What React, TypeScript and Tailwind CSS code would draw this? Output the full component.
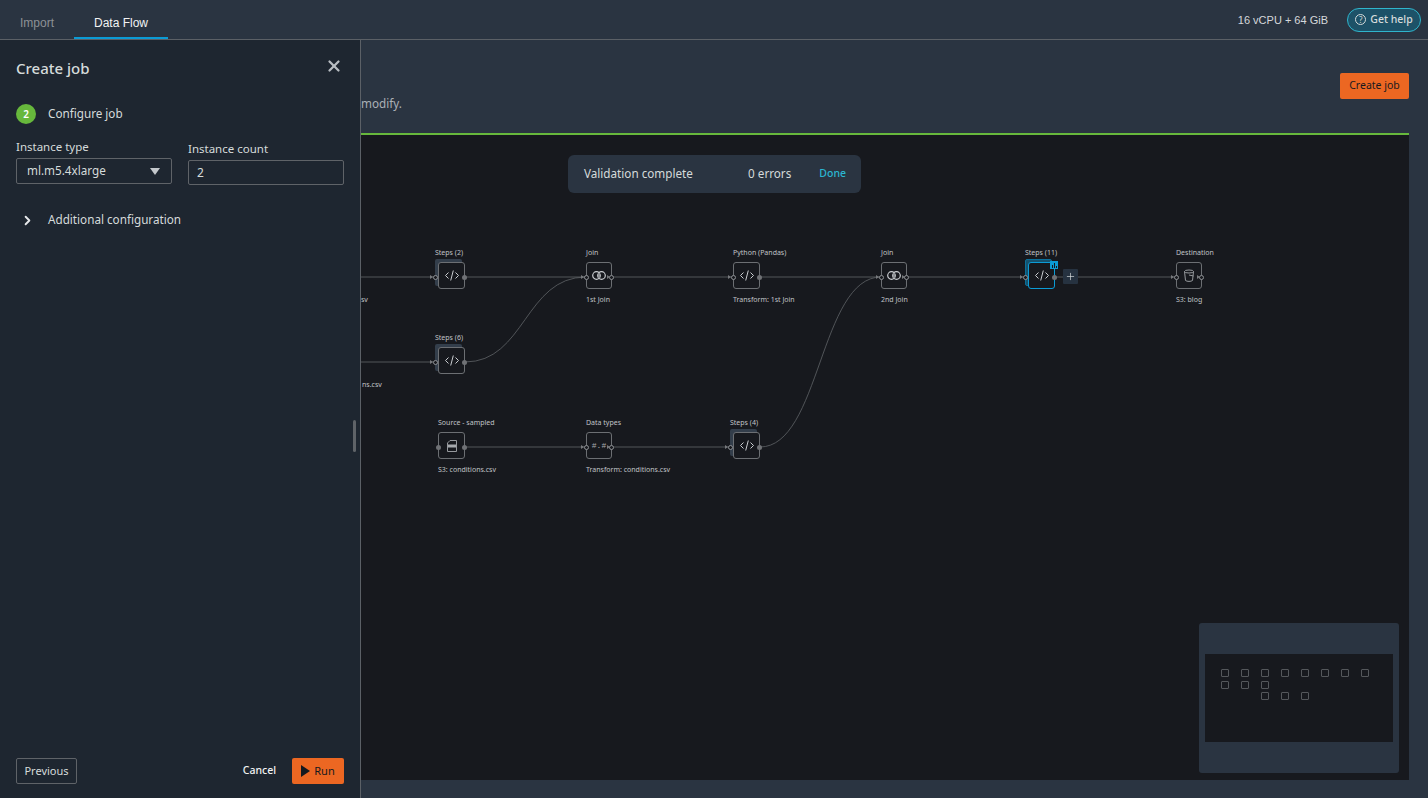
import { X, ChevronRight, Plus } from 'lucide-react'

const uiFont = "font-['Noto_Sans',sans-serif]"

type Port = 'open' | 'filled'
type GraphNode = {
  x: number
  y: number
  w: number
  top: string
  topX?: number
  bottom?: string
  icon: 'code' | 'join' | 'file' | 'types' | 'bucket'
  stacked?: boolean
  selected?: boolean
  left?: Port
  right: Port
  leftX?: number
}

const nodes: GraphNode[] = [
  { x: 438, y: 262, w: 27, top: 'Steps (2)', topX: 435, icon: 'code', stacked: true, left: 'open', right: 'filled', leftX: 435 },
  { x: 586, y: 262, w: 26, top: 'Join', bottom: '1st Join', icon: 'join', left: 'open', right: 'open' },
  { x: 733, y: 262, w: 27, top: 'Python (Pandas)', bottom: 'Transform: 1st Join', icon: 'code', left: 'open', right: 'filled' },
  { x: 881, y: 262, w: 26, top: 'Join', bottom: '2nd Join', icon: 'join', left: 'open', right: 'open' },
  { x: 1028, y: 262, w: 27, top: 'Steps (11)', topX: 1025, icon: 'code', stacked: true, selected: true, left: 'open', right: 'filled', leftX: 1025 },
  { x: 1176, y: 262, w: 26, top: 'Destination', bottom: 'S3: blog', icon: 'bucket', left: 'open', right: 'open' },
  { x: 438, y: 347, w: 27, top: 'Steps (6)', topX: 435, icon: 'code', stacked: true, left: 'open', right: 'filled', leftX: 435 },
  { x: 438, y: 432, w: 27, top: 'Source - sampled', bottom: 'S3: conditions.csv', icon: 'file', left: 'filled', right: 'filled' },
  { x: 586, y: 432, w: 26, top: 'Data types', bottom: 'Transform: conditions.csv', icon: 'types', left: 'open', right: 'open' },
  { x: 733, y: 432, w: 27, top: 'Steps (4)', topX: 730, icon: 'code', stacked: true, left: 'open', right: 'filled', leftX: 730 },
]

const miniSquares = [
  [1221, 669], [1241, 669], [1261, 669], [1281, 669], [1301, 669], [1321, 669], [1341, 669], [1361, 669],
  [1221, 681], [1241, 681], [1261, 681],
  [1261, 692], [1281, 692], [1301, 692],
]

function NodeIcon({ icon }: { icon: GraphNode['icon'] }) {
  if (icon === 'types') {
    return <span className="text-[8px] leading-none text-[#a6a9ad] font-['Liberation_Mono',monospace]">#.#</span>
  }
  const dim = icon === 'file' || icon === 'bucket'
  return (
    <svg width="16" height="16" viewBox="0 0 16 16" fill="none" stroke={dim ? '#96999d' : '#c9ccd0'} strokeWidth="1">
      {icon === 'code' && <path d="M4.5 4.5 1.5 7.5l3 3M11.5 4.5l3 3-3 3M9.3 2.5 6.7 12.5" />}
      {icon === 'join' && (
        <>
          <circle cx="5.5" cy="7.5" r="3.8" strokeWidth="1.2" />
          <circle cx="10.5" cy="7.5" r="3.8" strokeWidth="1.2" />
          <path d="M8 5v5" stroke="#8f9296" strokeWidth="2" />
        </>
      )}
      {icon === 'file' && (
        <>
          <path d="M6 2.5h6.5v11h-9V5Z" />
          <rect x="4" y="6.5" width="8" height="3" fill="#a6a9ad" stroke="none" />
        </>
      )}
      {icon === 'bucket' && (
        <>
          <ellipse cx="8" cy="3.5" rx="4.5" ry="1.5" />
          <path d="M3.5 3.5 4.5 12.5c1.5 1.2 5.5 1.2 7 0l1-9M8 7l4.5 1" />
        </>
      )}
    </svg>
  )
}

function PortDot({ kind, x, y }: { kind: Port; x: number; y: number }) {
  return (
    <>
      {kind === 'open' && (
        <span
          className="absolute w-0 h-0 border-y-[2px] border-y-transparent border-l-[3px] border-l-[#77797d]"
          style={{ left: x - 5, top: y - 2 }}
        />
      )}
      <span
        className={
          kind === 'open'
            ? 'absolute w-[5px] h-[5px] rounded-full border border-[#8d9094] bg-[#17191e]'
            : 'absolute w-[5px] h-[5px] rounded-full bg-[#6f7175]'
        }
        style={{ left: x - 2.5, top: y - 2.5 }}
      />
    </>
  )
}

function FlowNode({ node }: { node: GraphNode }) {
  const border = node.selected ? 'border-[#0b9bd5] border-[1.5px]' : 'border-[#6c6f73]'
  const cy = node.y + 15
  return (
    <>
      <span
        className="absolute text-[7px] leading-[10px] whitespace-nowrap text-[#c0c3c7]"
        style={{ left: node.topX ?? node.x, top: node.y - 14 }}
      >
        {node.top}
      </span>
      {node.stacked && (
        <div
          className={
            node.selected
              ? 'absolute w-[27px] h-[27px] rounded-[2px] bg-[#15526e] border border-[#0b6f99]'
              : 'absolute w-[27px] h-[27px] rounded-[2px] bg-[#333e4b]'
          }
          style={{ left: node.x - 3, top: node.y - 3 }}
        />
      )}
      <div
        className={`absolute h-[27px] rounded-[3px] border bg-[#17191e] flex items-center justify-center ${border}`}
        style={{ left: node.x, top: node.y, width: node.w }}
      >
        <NodeIcon icon={node.icon} />
      </div>
      {node.bottom && (
        <span
          className="absolute text-[7px] leading-[10px] whitespace-nowrap text-[#c0c3c7]"
          style={{ left: node.x, top: node.y + 33 }}
        >
          {node.bottom}
        </span>
      )}
      {node.left && <PortDot kind={node.left} x={node.leftX ?? node.x} y={cy} />}
      <PortDot kind={node.right} x={node.x + node.w - 0.5} y={cy} />
    </>
  )
}

export default function App() {
  return (
    <div className={`w-[1428px] h-[798px] flex flex-col overflow-hidden bg-[#2a3441] ${uiFont}`}>
      {/* top tabs */}
      <header className="h-10 shrink-0 flex items-stretch justify-between border-b border-[#5b6066] font-['Liberation_Sans',sans-serif]">
        <div className="flex">
          <div className="w-[74px] pl-5 pt-[16px] text-xs leading-[14px] text-[#8d9196]">Import</div>
          <div className="w-[94px] text-center pt-[16px] text-xs leading-[14px] text-[#f2f3f3] border-b-2 border-[#0b9bd5]">Data Flow</div>
        </div>
        <div className="flex items-center pr-[7px]">
          <span className="pt-px text-[11px] text-[#d5d8db]">16 vCPU + 64 GiB</span>
          <button className={`ml-[19px] w-[74px] h-6 flex items-center justify-center gap-1 rounded-xl border border-[#2fb5cc] bg-[#1d5268] text-[#d5dbdb] text-[10.5px] font-medium ${uiFont}`}>
            <span className="w-[11px] h-[11px] rounded-full border border-[#d5dbdb] text-[8px] leading-[10px] font-normal text-center">?</span>
            Get help
          </button>
        </div>
      </header>

      <div className="flex-1 flex min-h-0">
        {/* create job panel */}
        <aside className="relative w-[361px] shrink-0 flex flex-col justify-between bg-[#1e2630] border-r border-[#5b6066] px-4 pb-[14px]">
          <div>
            <div className="flex items-center justify-between pt-[16px] pr-[1px]">
              <h2 className="text-[15px] leading-6 font-medium text-[#d5dbdb]">Create job</h2>
              <X size={18} strokeWidth={3} className="text-[#b8bdc2] -mt-1" />
            </div>
            <div className="flex items-center gap-3 mt-[24px]">
              <span className="w-5 h-5 rounded-full bg-[#67b83c] text-white text-[10px] font-semibold flex items-center justify-center">2</span>
              <span className="text-[11.7px] text-[#d5dbdb]">Configure job</span>
            </div>
            <div className="flex gap-4 mt-[15px]">
              <div className="w-[156px]">
                <div className="text-[11.5px] leading-[16px] text-[#d5dbdb]">Instance type</div>
                <div className="mt-[3px] h-[26px] rounded-[2px] border border-[#5f6368] flex items-center justify-between pl-[10px] pr-[11px] text-[11.7px] text-[#d5dbdb]">
                  ml.m5.4xlarge
                  <span className="w-0 h-0 border-x-[5px] border-x-transparent border-t-[7px] border-t-[#c4c8cc]" />
                </div>
              </div>
              <div className="w-[156px] pt-[2px]">
                <div className="text-[11.5px] leading-[16px] text-[#d5dbdb]">Instance count</div>
                <div className="mt-[3px] h-[25px] rounded-[2px] border border-[#5f6368] flex items-center pl-[8px] text-xs text-[#d5dbdb]">2</div>
              </div>
            </div>
            <div className="flex items-center mt-[26px]">
              <ChevronRight size={15} strokeWidth={3} className="ml-[4px] text-[#e6e8ea] mt-[2px]" />
              <span className="ml-[13px] text-[11.7px] text-[#d5dbdb]">Additional configuration</span>
            </div>
          </div>

          <div className="flex items-center justify-between">
            <button className="w-[61px] h-[26px] rounded-[2px] border border-[#5f6368] text-[11px] text-[#d5dbdb]">Previous</button>
            <div className="flex items-center">
              <span className="text-[10.5px] font-medium text-[#f2f3f3]">Cancel</span>
              <button className="ml-4 w-[52px] h-[26px] rounded-[2px] bg-[#ec6722] flex items-center justify-center gap-1 text-[11px] text-[#16191f]">
                <span className="w-0 h-0 border-y-[6px] border-y-transparent border-l-[9px] border-l-[#16191f]" />
                Run
              </button>
            </div>
          </div>

          {/* resize handle */}
          <span className="absolute right-[4px] top-[380px] w-[3px] h-8 bg-[#5f6368] rounded-sm" />
        </aside>

        <main className="flex-1 min-w-0 flex flex-col pr-[19px] pb-[18px]">
          <div className="h-[93px] shrink-0 flex justify-between">
            <p className="mt-[55px] text-[11.7px] leading-4 text-[#aab0b6]">modify.</p>
            <button className="mt-[33px] w-[69px] h-[26px] rounded-[2px] bg-[#ec6722] text-[10.5px] text-[#16191f]">Create job</button>
          </div>

          {/* flow canvas */}
          <section className="relative flex-1 bg-[#17191e] border-t-2 border-[#67b83c] overflow-hidden">
            <div className="absolute left-[-361px] top-[-135px] w-[1428px] h-[798px]">
              <svg className="absolute left-0 top-0" width="1428" height="798" fill="none">
                <g stroke="#3f4246" strokeWidth="1.5">
                  <path d="M361 277H435M465 277H586M612 277H733M760 277H881M907 277H1025M1055 277H1176" />
                  <path d="M361 362H435M465 447H586M612 447H730" />
                </g>
                <g stroke="#606367" strokeWidth="0.8">
                  <path d="M465 362C525 362 525 277 586 277" />
                  <path d="M760 447C820 447 820 277 881 277" />
                </g>
              </svg>

              {nodes.map(node => (
                <FlowNode key={node.top + node.x + node.y} node={node} />
              ))}

              {/* first two sources sit behind the panel, only their tails show */}
              <span className="absolute left-[361px] top-[295px] text-[7px] leading-[10px] whitespace-nowrap text-[#c0c3c7]">sv</span>
              <span className="absolute left-[362px] top-[380px] text-[7px] leading-[10px] whitespace-nowrap text-[#c0c3c7]">ns.csv</span>

              {/* badge and add button of selected node */}
              <span className="absolute left-[1050px] top-[261px] w-2 h-2 bg-[#0b9bd5] flex items-end justify-center gap-px pb-px">
                <i className="w-px h-[3px] bg-[#16191f]" />
                <i className="w-px h-[5px] bg-[#16191f]" />
                <i className="w-px h-[2px] bg-[#16191f]" />
              </span>
              <span className="absolute left-[1063px] top-[269px] w-[15px] h-[15px] rounded-[1px] bg-[#263240] flex items-center justify-center">
                <Plus size={11} strokeWidth={1.5} className="text-[#d5dbdb]" />
              </span>

              {/* validation toast */}
              <div className="absolute left-[568px] top-[155px] w-[293px] h-[38px] rounded-md bg-[#2a3441] flex items-center pl-4 pr-[15px] text-[11.7px]">
                <span className="text-[#d5dbdb]">Validation complete</span>
                <span className="ml-auto text-[#d5dbdb]">0 errors</span>
                <span className="ml-[28px] text-[10.5px] font-medium text-[#2bb6d0]">Done</span>
              </div>

              {/* minimap */}
              <div className="absolute left-[1199px] top-[623px] w-[200px] h-[150px] rounded-[3px] bg-[#2a3441]" />
              <div className="absolute left-[1205px] top-[654px] w-[188px] h-[88px] bg-[#17191e]" />
              {miniSquares.map(([x, y]) => (
                <span
                  key={`${x}-${y}`}
                  className="absolute w-2 h-2 rounded-[1px] border border-[#54575b]"
                  style={{ left: x, top: y }}
                />
              ))}
            </div>
          </section>
        </main>
      </div>
    </div>
  )
}
